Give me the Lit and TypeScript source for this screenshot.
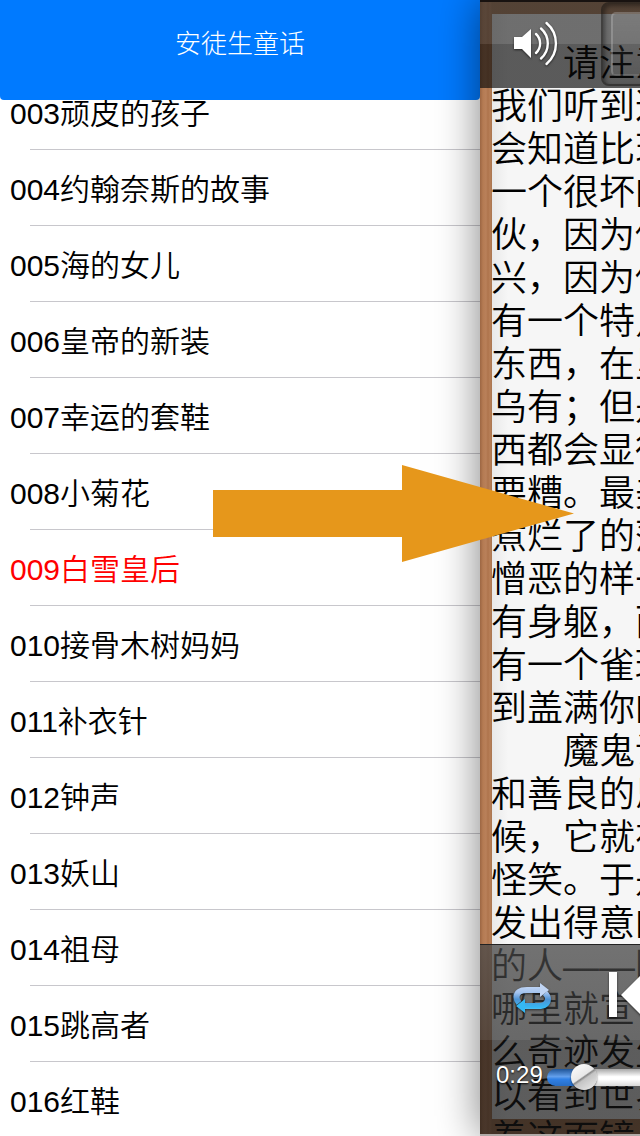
import { LitElement, html, css, svg } from "lit";
import { customElement, property, state } from "lit/decorators.js";
import { classMap } from "lit/directives/class-map.js";

interface Story {
  id: string;
  title: string;
}

const STORIES: Story[] = [
  { id: "003", title: "顽皮的孩子" },
  { id: "004", title: "约翰奈斯的故事" },
  { id: "005", title: "海的女儿" },
  { id: "006", title: "皇帝的新装" },
  { id: "007", title: "幸运的套鞋" },
  { id: "008", title: "小菊花" },
  { id: "009", title: "白雪皇后" },
  { id: "010", title: "接骨木树妈妈" },
  { id: "011", title: "补衣针" },
  { id: "012", title: "钟声" },
  { id: "013", title: "妖山" },
  { id: "014", title: "祖母" },
  { id: "015", title: "跳高者" },
  { id: "016", title: "红鞋" },
];

const PARAGRAPHS: string[][] = [
  [
    "请注意",
    "我们听到这",
    "会知道比现",
    "一个很坏的",
    "伙，因为他",
    "兴，因为他",
    "有一个特点",
    "东西，在里",
    "乌有；但是",
    "西都会显得",
    "要糟。最美",
    "煮烂了的菠",
    "憎恶的样子",
    "有身躯，而",
    "有一个雀斑",
    "到盖满你的",
  ],
  [
    "魔鬼说",
    "和善良的思",
    "候，它就在",
    "怪笑。于是",
    "发出得意的",
    "的人——因",
    "哪里就宣传",
    "么奇迹发生",
    "以看到世界",
    "着这面镜子",
  ],
];

@customElement("story-list")
class StoryList extends LitElement {
  @property() current = "";

  static styles = css`
    :host {
      display: flex;
      flex-direction: column;
      background: #fff;
    }
    .bar {
      flex: none;
      height: 100px;
      box-sizing: border-box;
      padding-bottom: 12px;
      display: flex;
      align-items: center;
      justify-content: center;
      background: #007aff;
      border-radius: 0 0 4px 4px;
      color: #fff;
      z-index: 1;
    }
    .title {
      margin: 0;
      font-size: 26px;
      font-weight: 300;
      line-height: 32px;
    }
    .list {
      list-style: none;
      margin: -26px 0 0;
      padding: 0;
    }
    .row {
      height: 76px;
      display: flex;
      align-items: center;
      position: relative;
    }
    .row::after {
      content: "";
      position: absolute;
      left: 30px;
      right: 0;
      bottom: 0;
      height: 1px;
      background: #c8c7cc;
    }
    .link {
      flex: 1;
      padding: 4px 10px 0;
      color: #000;
      text-decoration: none;
      font-size: 30px;
      line-height: 40px;
    }
    .current {
      color: #f00;
    }
  `;

  render() {
    return html`
      <header class="bar"><h1 class="title">安徒生童话</h1></header>
      <ul class="list">
        ${STORIES.map(
          (s) => html`<li class="row">
            <a
              class=${classMap({ link: true, current: s.id === this.current })}
              href="#${s.id}"
              >${s.id}${s.title}</a
            >
          </li>`
        )}
      </ul>
    `;
  }
}

const speakerIcon = svg`
  <path fill="#fff" d="M1 14h8l9-8v29l-9-9H1z"/>
  <g fill="none" stroke="#fff" stroke-width="2.4" stroke-linecap="round">
    <path d="M23 11a13 13 0 0 1 0 19"/>
    <path d="M28 5.500a20 20 0 0 1 0 30"/>
    <path d="M33.500 0a27 27 0 0 1 0 41"/>
  </g>`;

const repeatIcon = svg`
  <defs>
    <linearGradient id="ring" gradientUnits="userSpaceOnUse" x1="0" y1="2" x2="0" y2="28">
      <stop offset="0" stop-color="#c6d8f6"/>
      <stop offset="0.300" stop-color="#a3c3ee"/>
      <stop offset="0.550" stop-color="#4f93d4"/>
      <stop offset="0.850" stop-color="#36b6f2"/>
      <stop offset="1" stop-color="#5cc8f8"/>
    </linearGradient>
  </defs>
  <g fill="none" stroke="url(#ring)" stroke-width="6">
    <path d="M29 7H14Q4 7 3.500 14Q3.500 17 6 20"/>
    <path d="M10 23H25Q34.500 23 35 16Q35 13 32 10"/>
  </g>
  <path fill="#c0d5f4" d="M27 0l9 7-9 7z"/>
  <path fill="#34b8f4" d="M12 30l-9-7 9-7z"/>`;

@customElement("story-reader")
class StoryReader extends LitElement {
  @state() private elapsed = 29;

  static styles = css`
    :host {
      display: block;
      position: relative;
      overflow: hidden;
      background: linear-gradient(
        90deg,
        #9c6643 0,
        #b57b53 3px,
        #b9805a 6px,
        #ae744c 8px,
        #b87f58 10px,
        #a8754f 12px
      );
    }
    .page {
      position: absolute;
      inset: 14px 0 17px 12px;
      background: linear-gradient(90deg, #e9e9e9, #f6f6f6 16px);
      color: #000;
      font-size: 36px;
      line-height: 43px;
      white-space: nowrap;
    }
    .text {
      margin: 28px 0 0 -1px;
    }
    .para {
      margin: 0;
      text-indent: 2em;
    }
    .line {
      display: block;
    }
    .line + .line {
      text-indent: 0;
    }
    .top,
    .bottom {
      position: absolute;
      left: 0;
      right: 0;
      overflow: hidden;
    }
    .top {
      top: 0;
      height: 88px;
      display: flex;
      gap: 44px;
      padding-left: 33px;
      background: linear-gradient(
        rgba(40, 40, 40, 0.66) 0 44px,
        rgba(10, 10, 10, 0.66) 44px
      );
      box-shadow: inset 0 2px #181210;
    }
    .bottom {
      bottom: 2px;
      height: 190px;
      box-sizing: border-box;
      border-top: 1px solid #222;
      background: linear-gradient(
        rgba(72, 72, 72, 0.76) 0,
        rgba(50, 50, 50, 0.72) 95px,
        rgba(20, 20, 20, 0.68) 95px
      );
    }
    .edge {
      position: absolute;
      inset: auto 0 0 0;
      height: 2px;
      background: #b0aaa7;
    }
    .button {
      flex: none;
      margin: 0;
      padding: 0;
      border: 0;
      background: none;
      color: #fff;
      font: inherit;
    }
    .icon {
      display: block;
      overflow: visible;
      filter: drop-shadow(0 1px 1px rgba(0, 0, 0, 0.6));
    }
    .frame {
      flex: none;
      width: 130px;
      height: 84px;
      margin-top: 2px;
      box-sizing: border-box;
      border: 2px solid rgba(20, 18, 16, 0.5);
      border-radius: 8px;
      padding: 8px;
      box-shadow: inset 2px 2px 4px rgba(0, 0, 0, 0.4);
    }
    .menu {
      width: 100%;
      height: 100%;
      border: 2px solid rgba(190, 190, 190, 0.35);
      border-bottom-color: transparent;
      border-radius: 5px;
      background: linear-gradient(rgba(160, 160, 160, 0.25), transparent);
    }
    .controls {
      display: flex;
      gap: 56px;
      align-items: center;
      height: 100px;
      padding-left: 33px;
    }
    .progress {
      display: flex;
      align-items: center;
      gap: 4px;
      height: 60px;
      padding-left: 16px;
      color: #fff;
    }
    .time {
      font-size: 24px;
      line-height: 28px;
      text-shadow: 0 1px 2px #000;
    }
    .seek {
      flex: none;
      appearance: none;
      width: 480px;
      height: 28px;
      margin: 4px 0 0;
      background: none;
    }
    .seek::-webkit-slider-runnable-track {
      height: 17px;
      border-radius: 9px;
      background: linear-gradient(
          rgba(0, 0, 0, 0.35),
          rgba(255, 255, 255, 0.25) 45%,
          rgba(255, 255, 255, 0) 60%,
          rgba(0, 0, 0, 0.15)
        ),
        linear-gradient(90deg, #2f80e6 36px, #fff 36px);
    }
    .seek::-webkit-slider-thumb {
      appearance: none;
      width: 26px;
      height: 26px;
      margin-top: -5px;
      border-radius: 50%;
      background: linear-gradient(
        145deg,
        #fff 0,
        #e8e8e8 46%,
        #888 50%,
        #c4c4c4 56%,
        #eee 100%
      );
      box-shadow: 0 1px 2px rgba(0, 0, 0, 0.6);
    }
  `;

  private onSeek(e: Event) {
    this.elapsed = Number((e.target as HTMLInputElement).value);
  }

  render() {
    const m = Math.floor(this.elapsed / 60);
    const s = String(this.elapsed % 60).padStart(2, "0");
    return html`
      <article class="page">
        <div class="text">
          ${PARAGRAPHS.map(
            (lines) => html`<p class="para">
              ${lines.map((l) => html`<span class="line">${l}</span>`)}
            </p>`
          )}
        </div>
      </article>
      <div class="top">
        <button class="button" aria-label="Volume">
          <svg class="icon" width="44" height="42" viewBox="0 0 44 42">${speakerIcon}</svg>
        </button>
        <div class="frame"><button class="button menu" aria-label="Menu"></button></div>
      </div>
      <div class="bottom">
        <div class="controls">
          <button class="button" aria-label="Repeat">
            <svg class="icon" width="39" height="31" viewBox="0 -3 39 31">${repeatIcon}</svg>
          </button>
          <button class="button" aria-label="Previous">
            <svg class="icon" width="60" height="46" viewBox="0 0 60 46">
              <path fill="#fff" d="M1 0h8v45H1zM13 23L36 0v46z" />
            </svg>
          </button>
        </div>
        <div class="progress">
          <label class="time" for="seek">${m}:${s}</label>
          <input
            class="seek"
            id="seek"
            type="range"
            min="0"
            max="553"
            .value=${String(this.elapsed)}
            @input=${this.onSeek}
          />
        </div>
      </div>
      <div class="edge"></div>
    `;
  }
}

@customElement("app-root")
class AppRoot extends LitElement {
  static styles = css`
    :host {
      display: grid;
      grid-template-columns: 3fr 1fr;
      position: relative;
      height: 100vh;
      overflow: hidden;
      font-family: "Liberation Sans", "Noto Sans CJK SC", sans-serif;
      font-weight: 350;
    }
    .list,
    .reader {
      min-width: 0;
      min-height: 0;
    }
    .reader {
      box-shadow: 0 0 40px rgba(0, 0, 0, 0.5);
      z-index: 1;
    }
    .hint {
      position: absolute;
      left: 213px;
      top: 465px;
      z-index: 2;
      pointer-events: none;
    }
  `;

  render() {
    return html`
      <story-list class="list" current="009"></story-list>
      <story-reader class="reader"></story-reader>
      <svg class="hint" width="361" height="97" viewBox="0 0 361 97" aria-hidden="true">
        <path fill="#e6971b" d="M0 25h189V0l172 48.500L189 97V72H0z" />
      </svg>
    `;
  }
}
